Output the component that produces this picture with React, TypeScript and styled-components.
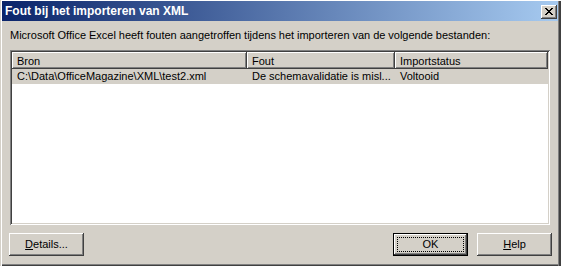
import React from "react";
import styled, { createGlobalStyle } from "styled-components";

const Global = createGlobalStyle`
  html, body { margin: 0; padding: 0; background: #d4d0c8; }
  body { font-family: "Liberation Sans", Arial, sans-serif; font-size: 11px; color: #000; }
  * { box-sizing: border-box; }
`;

const Window = styled.div`
  width: 561px;
  height: 266px;
  background: #d4d0c8;
  display: flex;
  flex-direction: column;
  padding: 1px 3px 2px 2px;
  box-shadow:
    inset 1px 0 0 #d4d0c8,
    inset 2px 0 0 #ffffff,
    inset 0 1px 0 #ffffff,
    inset -2px 0 0 #404040,
    inset -3px 0 0 #808080,
    inset 0 -1px 0 #404040,
    inset 0 -2px 0 #808080;
`;

const TitleBar = styled.div`
  height: 20px;
  flex: none;
  display: flex;
  align-items: flex-start;
  justify-content: space-between;
  padding: 0 1px 0 3px;
  background: linear-gradient(to right, #0a246a 0%, #a6caf0 100%);
`;

const TitleText = styled.span`
  color: #ffffff;
  font-weight: bold;
  font-size: 12px;
  line-height: 14px;
  margin-top: 3px;
  white-space: nowrap;
`;

const CloseButton = styled.div`
  width: 16px;
  height: 14px;
  margin-top: 4px;
  background: #d4d0c8;
  display: flex;
  align-items: flex-start;
  justify-content: flex-start;
  padding: 3px 0 0 4px;
  box-shadow:
    inset -1px -1px 0 #404040,
    inset 1px 1px 0 #ffffff,
    inset -2px -2px 0 #808080;
`;

const Body = styled.div`
  flex: 1;
  display: flex;
  flex-direction: column;
  padding: 8px 6px 0 7px;
`;

const Message = styled.div`
  line-height: 13px;
  height: 13px;
  margin-left: 1px;
  word-spacing: -0.15px;
  white-space: nowrap;
`;

const ListBox = styled.div`
  margin: 8px 2px 0 1px;
  height: 175px;
  padding: 2px;
  background: #ffffff;
  box-shadow:
    inset 1px 1px 0 #808080,
    inset -1px -1px 0 #ffffff,
    inset 2px 2px 0 #404040,
    inset -2px -2px 0 #d4d0c8;
  display: flex;
  flex-direction: column;
`;

const Columns = styled.div<{ $bg?: string }>`
  display: grid;
  grid-template-columns: 235px 148px 1fr;
  background: ${(p) => p.$bg ?? "transparent"};
`;

const HeaderCell = styled.div`
  height: 17px;
  padding: 3px 5px 0 5px;
  line-height: 13px;
  background: #d4d0c8;
  white-space: nowrap;
  overflow: hidden;
  box-shadow:
    inset -1px -1px 0 #404040,
    inset 1px 1px 0 #ffffff,
    inset -2px -2px 0 #808080;
`;

const Cell = styled.div`
  height: 15px;
  padding: 1px 5px 0 5px;
  line-height: 13px;
  white-space: nowrap;
  overflow: hidden;
`;

const ButtonRow = styled.div`
  display: flex;
  align-items: flex-start;
  margin-top: 8px;
  gap: 9px;
`;

const Spacer = styled.div`
  flex: 1;
`;

const Button = styled.div<{ $default?: boolean }>`
  position: relative;
  width: 75px;
  height: 23px;
  display: flex;
  align-items: center;
  justify-content: center;
  line-height: 13px;
  background: #d4d0c8;
  border: ${(p) => (p.$default ? "1px solid #000000" : "none")};
  box-shadow:
    inset -1px -1px 0 #404040,
    inset 1px 1px 0 #ffffff,
    inset -2px -2px 0 #808080;
`;

const FocusRect = styled.span`
  position: absolute;
  inset: 3px;
  border: 1px dotted #000000;
  pointer-events: none;
`;

const Key = styled.span`
  text-decoration: underline;
`;

function CloseGlyph() {
  const rows: [number, number][][] = [
    [[0, 2], [6, 2]],
    [[1, 2], [5, 2]],
    [[2, 4]],
    [[3, 2]],
    [[2, 4]],
    [[1, 2], [5, 2]],
    [[0, 2], [6, 2]],
  ];
  return (
    <svg width="8" height="7" viewBox="0 0 8 7" shapeRendering="crispEdges">
      {rows.map((segs, y) =>
        segs.map(([x, w], i) => <rect key={`${y}-${i}`} x={x} y={y} width={w} height={1} fill="#000" />)
      )}
    </svg>
  );
}

export default function App() {
  return (
    <>
      <Global />
      <Window>
        <TitleBar>
          <TitleText>Fout bij het importeren van XML</TitleText>
          <CloseButton>
            <CloseGlyph />
          </CloseButton>
        </TitleBar>
        <Body>
          <Message>
            Microsoft Office Excel heeft fouten aangetroffen tijdens het importeren van de volgende bestanden:
          </Message>
          <ListBox>
            <Columns>
              <HeaderCell>Bron</HeaderCell>
              <HeaderCell>Fout</HeaderCell>
              <HeaderCell>Importstatus</HeaderCell>
            </Columns>
            <Columns $bg="#d4d0c8">
              <Cell>C:\Data\OfficeMagazine\XML\test2.xml</Cell>
              <Cell>De schemavalidatie is misl...</Cell>
              <Cell>Voltooid</Cell>
            </Columns>
          </ListBox>
          <ButtonRow>
            <Button>
              <span>
                <Key>D</Key>etails...
              </span>
            </Button>
            <Spacer />
            <Button $default>
              <FocusRect />
              <span>OK</span>
            </Button>
            <Button>
              <span>
                <Key>H</Key>elp
              </span>
            </Button>
          </ButtonRow>
        </Body>
      </Window>
    </>
  );
}
